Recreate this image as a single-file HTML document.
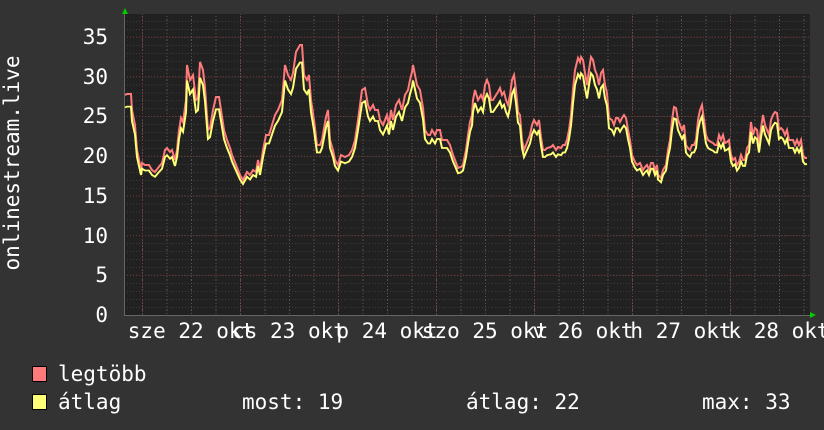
<!DOCTYPE html>
<html><head><meta charset="utf-8"><style>
html,body{margin:0;padding:0;background:#333;}
svg{display:block}
text{font-family:"DejaVu Sans Mono","Liberation Mono",monospace;fill:#fff;font-size:21px}
</style></head><body>
<svg width="824" height="430" viewBox="0 0 824 430" xmlns="http://www.w3.org/2000/svg">
<defs>
<pattern id="hmin" x="124" y="315" width="24.5" height="7.94" patternUnits="userSpaceOnUse">
<line x1="0" y1="0" x2="24.5" y2="0" stroke="#555" stroke-width="1" stroke-dasharray="1,2"/>
</pattern>
<pattern id="vmin" x="142" y="0" width="24.5" height="10" patternUnits="userSpaceOnUse">
<line x1="0.5" y1="0" x2="0.5" y2="10" stroke="#555" stroke-width="1" stroke-dasharray="1,2"/>
</pattern>
<polyline id="series" fill="none" stroke-width="2" points="125,95 127,94 131,94 132,110 135,125 137,150 140,165 141,170 142,163 145,165 149,165 152,170 155,172 158,168 162,163 165,150 167,148 170,152 172,150 175,160 177,150 179,130 181,118 183,122 186,100 187,65 190,80 193,75 196,100 198,98 200,62 203,70 205,88 208,130 210,128 213,110 216,97 219,97 221,110 224,130 227,140 230,148 232,155 234,160 236,165 240,175 243,180 247,172 250,175 253,170 256,172 258,160 260,170 263,150 266,135 269,135 272,125 275,115 278,110 282,100 285,65 288,75 291,80 293,73 296,52 300,45 302,45 304,75 307,80 309,75 311,100 314,120 317,145 320,145 322,140 326,117 328,110 330,140 333,150 335,160 338,165 341,155 345,157 349,155 352,150 355,140 358,120 362,90 365,88 368,105 370,110 373,105 375,110 378,110 380,120 383,125 387,115 389,125 391,110 393,120 396,105 399,100 402,110 405,95 408,90 410,80 412,72 413,65 415,75 417,85 420,90 423,108 425,130 428,135 430,135 432,130 435,135 437,130 440,130 442,140 444,140 447,140 450,145 453,155 455,160 458,168 461,167 463,165 466,150 468,135 470,122 472,115 473,100 475,90 478,100 481,95 483,100 485,85 487,80 489,85 491,100 493,100 496,95 498,92 500,88 502,95 504,92 506,100 508,105 510,95 512,80 514,75 516,90 518,112 520,115 522,140 524,150 526,145 528,140 530,135 532,125 534,120 537,125 539,120 541,137 543,150 545,150 547,148 551,147 553,145 556,150 558,147 561,148 563,145 565,145 567,140 569,130 571,115 573,90 575,70 578,58 580,62 581,57 583,60 585,73 587,85 589,70 591,57 593,60 595,70 597,75 599,85 601,73 603,70 605,85 607,93 609,118 612,120 614,125 616,118 618,118 620,122 622,118 624,115 626,118 628,130 630,140 632,155 635,162 637,165 640,163 643,170 645,167 647,165 649,170 651,163 653,163 655,170 657,165 658,175 661,178 663,170 666,165 668,150 670,140 672,120 674,107 676,108 678,120 680,125 682,130 684,125 686,145 688,148 690,150 692,145 694,145 696,140 698,120 700,110 702,105 704,120 706,135 708,140 711,142 713,143 715,145 717,145 719,135 721,140 723,135 725,143 727,142 729,140 731,155 733,160 735,158 737,165 739,162 741,155 743,160 745,160 747,148 749,145 751,122 753,135 755,128 757,130 759,145 761,128 763,115 765,125 767,130 769,135 771,120 773,115 775,112 777,113 779,130 781,128 783,130 785,135 787,130 789,140 791,140 793,140 795,145 797,140 799,145 801,140 803,155 805,158 807,158"/>
</defs>
<rect x="124" y="14" width="686" height="301" fill="#212121"/>
<rect x="124" y="14" width="686" height="301" fill="url(#hmin)"/>
<rect x="124" y="14" width="686" height="301" fill="url(#vmin)"/>
<g stroke="#7a3535" stroke-width="1" stroke-dasharray="1,2">
<line x1="124" x2="810" y1="275.3" y2="275.3"/><line x1="124" x2="810" y1="235.6" y2="235.6"/>
<line x1="124" x2="810" y1="195.9" y2="195.9"/><line x1="124" x2="810" y1="156.2" y2="156.2"/>
<line x1="124" x2="810" y1="116.5" y2="116.5"/><line x1="124" x2="810" y1="76.8" y2="76.8"/>
<line x1="124" x2="810" y1="37.1" y2="37.1"/>
<line x1="142.5" x2="142.5" y1="14" y2="315"/><line x1="240.5" x2="240.5" y1="14" y2="315"/>
<line x1="338.5" x2="338.5" y1="14" y2="315"/><line x1="436.5" x2="436.5" y1="14" y2="315"/>
<line x1="534.5" x2="534.5" y1="14" y2="315"/><line x1="632.5" x2="632.5" y1="14" y2="315"/>
<line x1="730.5" x2="730.5" y1="14" y2="315"/>
</g>
<line x1="124" y1="315.5" x2="812" y2="315.5" stroke="#666"/>
<line x1="124.5" y1="12" x2="124.5" y2="316" stroke="#666"/>
<polygon points="122,14 125,8 128,14" fill="#0c0"/>
<polygon points="810,312 816,315 810,318" fill="#0c0"/>
<use href="#series" stroke="#ff7b7b"/>
<g transform="matrix(1,0,0,0.9,0,22)"><use href="#series" stroke="#ffff77" style="vector-effect:non-scaling-stroke"/></g>
<g>
<text x="108" y="44" text-anchor="end">35</text>
<text x="108" y="84" text-anchor="end">30</text>
<text x="108" y="123" text-anchor="end">25</text>
<text x="108" y="163" text-anchor="end">20</text>
<text x="108" y="203" text-anchor="end">15</text>
<text x="108" y="243" text-anchor="end">10</text>
<text x="108" y="282" text-anchor="end">5</text>
<text x="108" y="322" text-anchor="end">0</text>
</g>
<text transform="translate(19,163) rotate(-90)" text-anchor="middle">onlinestream.live</text>
<g text-anchor="middle">
<text x="191" y="338">sze 22 okt</text>
<text x="289" y="338">cs 23 okt</text>
<text x="387" y="338">p 24 okt</text>
<text x="485" y="338">szo 25 okt</text>
<text x="583" y="338">v 26 okt</text>
<text x="681" y="338">h 27 okt</text>
<text x="779" y="338">k 28 okt</text>
</g>
<rect x="32.5" y="366.5" width="14" height="15" fill="#ff7b7b" stroke="#000"/>
<rect x="32.5" y="394.5" width="14" height="15" fill="#ffff77" stroke="#000"/>
<text x="58" y="381">legtöbb</text>
<text x="58" y="409">átlag</text>
<text x="242" y="409">most: 19</text>
<text x="466" y="409">átlag: 22</text>
<text x="702" y="409">max: 33</text>
</svg>
</body></html>
